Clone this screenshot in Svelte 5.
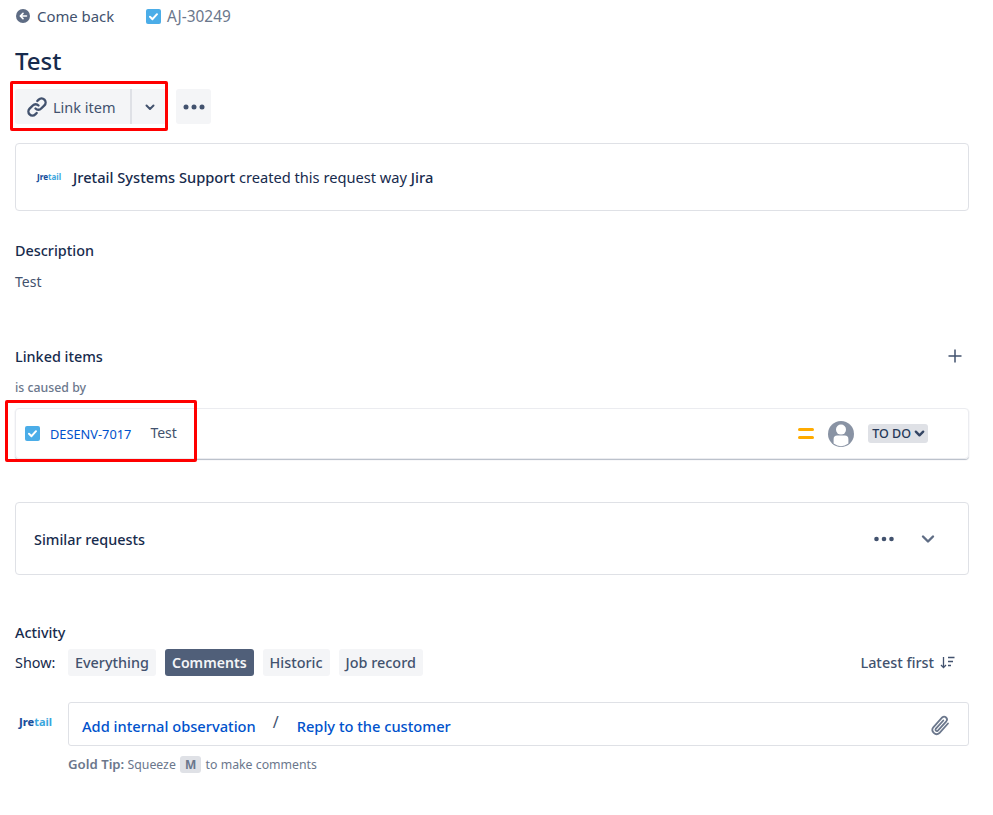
<script>
  const filters = ['Everything', 'Comments', 'Historic', 'Job record']
  let activeFilter = 'Comments'
</script>

<div class="page">
  <div class="crumbs">
    <a class="back">
      <svg width="16" height="16" viewBox="0 0 16 16"><circle cx="8" cy="8" r="7" fill="#5e6c84"/><path d="M11.5 8H5.5M8 5.4 5.3 8 8 10.6" fill="none" stroke="#fff" stroke-width="1.6" stroke-linecap="round" stroke-linejoin="round"/></svg>
      Come back
    </a>
    <span class="issue-key">
      <svg class="check" width="15" height="15" viewBox="0 0 15 15"><rect width="15" height="15" rx="2" fill="#4bade8"/><path d="M4 7.8 6.5 10.2 11 5.2" fill="none" stroke="#fff" stroke-width="2" stroke-linecap="round" stroke-linejoin="round"/></svg>
      AJ-30249
    </span>
  </div>

  <h1>Test</h1>

  <div class="actions">
    <div class="split">
      <button class="btn link-btn">
        <svg width="24" height="24" viewBox="0 0 24 24" fill="none" stroke="#42526e" stroke-width="2.4" stroke-linecap="round"><path d="M10.5 13.5a4 4 0 0 0 5.7 0l3.2-3.2a4 4 0 0 0-5.7-5.7l-1.4 1.4"/><path d="M13.5 10.5a4 4 0 0 0-5.7 0l-3.2 3.2a4 4 0 0 0 5.7 5.7l1.4-1.4"/></svg>
        Link item
      </button>
      <button class="btn caret-btn" aria-label="More link options">
        <svg width="12" height="12" viewBox="0 0 12 12"><path d="M2.5 4.5 6 8l3.5-3.5" fill="none" stroke="#42526e" stroke-width="2" stroke-linecap="round" stroke-linejoin="round"/></svg>
      </button>
    </div>
    <button class="btn more-btn" aria-label="More actions">
      <svg width="22" height="6" viewBox="0 0 22 6" fill="#42526e"><circle cx="3" cy="3" r="2.5"/><circle cx="11" cy="3" r="2.5"/><circle cx="19" cy="3" r="2.5"/></svg>
    </button>
  </div>

  <div class="card created">
    <span class="logo small"><b>Jre</b><i>tail</i></span>
    <p><strong>Jretail Systems Support</strong> created this request way <span class="medium">Jira</span></p>
  </div>

  <h2 class="desc-title">Description</h2>
  <p class="desc">Test</p>

  <div class="linked-head">
    <h2>Linked items</h2>
    <svg width="14" height="14" viewBox="0 0 14 14"><path d="M7 .5v13M.5 7h13" stroke="#42526e" stroke-width="1.5"/></svg>
  </div>
  <div class="relation">is caused by</div>

  <div class="linked-row">
    <svg class="check" width="15" height="15" viewBox="0 0 15 15"><rect width="15" height="15" rx="2" fill="#4bade8"/><path d="M4 7.8 6.5 10.2 11 5.2" fill="none" stroke="#fff" stroke-width="2" stroke-linecap="round" stroke-linejoin="round"/></svg>
    <a class="row-key">DESENV-7017</a>
    <span class="row-title">Test</span>
    <span class="row-right">
      <svg width="16" height="12" viewBox="0 0 16 12" fill="#ffab00"><rect y="0" width="16" height="3" rx="1.5"/><rect y="8" width="16" height="3" rx="1.5"/></svg>
      <svg class="avatar" width="26" height="26" viewBox="0 0 26 26"><circle cx="13" cy="13" r="13" fill="#8993a4"/><circle cx="13" cy="8.6" r="5" fill="#fff"/><path d="M5.6 22.6v-4.4a3.6 3.6 0 0 1 3.6-3.6h7.6a3.6 3.6 0 0 1 3.6 3.6v4.4a13 13 0 0 1-14.8 0Z" fill="#fff"/></svg>
      <span class="status">TO DO
        <svg width="11" height="11" viewBox="0 0 12 12"><path d="M2 4 6 8l4-4" fill="none" stroke="#344563" stroke-width="2.6" stroke-linecap="round" stroke-linejoin="round"/></svg>
      </span>
    </span>
  </div>

  <div class="card similar">
    <h2>Similar requests</h2>
    <span class="similar-right">
      <svg width="20" height="6" viewBox="0 0 20 6" fill="#42526e"><circle cx="2.5" cy="3" r="2.3"/><circle cx="10" cy="3" r="2.3"/><circle cx="17.5" cy="3" r="2.3"/></svg>
      <svg width="14" height="10" viewBox="0 0 14 10"><path d="M2 2.5 7 7.5l5-5" fill="none" stroke="#5e6c84" stroke-width="2.4" stroke-linecap="round" stroke-linejoin="round"/></svg>
    </span>
  </div>

  <h2 class="activity-title">Activity</h2>
  <div class="filter-row">
    <span class="show">Show:</span>
    {#each filters as filter}
      <button class="filter" class:active={filter === activeFilter}>{filter}</button>
    {/each}
    <span class="sort">Latest first
      <svg width="15" height="13" viewBox="0 0 15 13" fill="none" stroke="#42526e" stroke-width="1.3"><path d="M3.5 1v10.5M1 9l2.5 2.6L6 9"/><path d="M8 1.5h6.5M8 5.500h5M8 9.500h3"/></svg>
    </span>
  </div>

  <div class="comment-row">
    <span class="logo wide"><b>Jre</b><i>tail</i></span>
    <div class="comment-box">
      <a>Add internal observation</a>
      <span class="slash">/</span>
      <a>Reply to the customer</a>
      <svg class="clip" width="22" height="24" viewBox="0 0 22 24" fill="none" stroke="#6b778c" stroke-width="1.8" stroke-linecap="round"><path d="M19 9.5 10.400 19a4.200 4.200 0 0 1-6.100-5.700l8.900-9.800a2.800 2.800 0 0 1 4.100 3.800l-8.600 9.500a1.400 1.400 0 0 1-2-1.900l7.600-8.400"/></svg>
    </div>
  </div>
  <p class="tip"><strong>Gold Tip:</strong> Squeeze <kbd>M</kbd> to make comments</p>

  <div class="mark mark-actions"></div>
  <div class="mark mark-row"></div>
</div>

<style>
  :global(body) {
    background: #fff;
  }

  .page {
    position: relative;
    box-sizing: border-box;
    width: 993px;
    height: 815px;
    padding: 5px 24px 0 15px;
    font-family: "Noto Sans", sans-serif;
    font-size: 14.65px;
    color: #172b4d;
    overflow: hidden;
  }

  p, h1, h2 {
    margin: 0;
  }

  h2 {
    font-size: 14.4px;
    font-weight: 500;
  }

  button {
    border: 0;
    font: inherit;
    cursor: pointer;
  }

  .crumbs {
    display: flex;
    align-items: center;
    height: 22px;
    font-size: 14.9px;
    color: #42526e;
  }

  .back {
    display: flex;
    align-items: center;
    gap: 6px;
    width: 131px;
  }

  .issue-key {
    display: flex;
    align-items: center;
    gap: 6px;
    font-size: 15.4px;
    color: #6b778c;
  }

  h1 {
    margin-top: 19px;
    font-size: 24px;
    line-height: 30px;
    font-weight: 500;
    color: #172b4d;
  }

  .actions {
    display: flex;
    gap: 8px;
    margin-top: 13px;
  }

  .split {
    display: flex;
    width: 153px;
    height: 35px;
  }

  .btn {
    display: flex;
    align-items: center;
    justify-content: center;
    background: #f4f5f7;
    color: #42526e;
    border-radius: 3px;
    padding: 0;
  }

  .link-btn {
    justify-content: flex-start;
    gap: 4px;
    width: 115px;
    padding-left: 10px;
    font-size: 14.5px;
    border-radius: 3px 0 0 3px;
  }

  .caret-btn {
    flex: 1;
    padding-right: 1px;
    border-left: 2px solid #dfe1e6;
    border-radius: 0;
  }

  .more-btn {
    width: 35px;
  }

  .card {
    border: 1px solid #dfe1e6;
    border-radius: 4px;
    box-sizing: border-box;
  }

  .created {
    display: flex;
    align-items: center;
    gap: 11px;
    height: 68px;
    margin-top: 19px;
    padding-left: 20px;
  }

  strong {
    font-weight: 500;
  }

  .medium {
    font-weight: 500;
  }

  .logo {
    line-height: 1;
    text-align: center;
    white-space: nowrap;
  }

  .logo b {
    font-weight: 800;
    color: #1b4f9c;
  }

  .logo i {
    font-style: normal;
    font-weight: 700;
    color: #3aa6dd;
  }

  .logo.small {
    width: 26px;
    font-size: 8px;
  }

  .logo.wide {
    width: 53px;
    padding: 0 15px 0 3px;
    box-sizing: border-box;
    margin-top: -6px;
    font-size: 11px;
  }

  .desc-title {
    margin-top: 30px;
    line-height: 20px;
  }

  .desc {
    margin-top: 11px;
    font-size: 14px;
    line-height: 20px;
    color: #42526e;
  }

  .linked-head {
    display: flex;
    align-items: center;
    justify-content: space-between;
    margin-top: 54px;
    padding-right: 7px;
    height: 20px;
  }

  .relation {
    margin-top: 14px;
    font-size: 12.3px;
    font-weight: 500;
    line-height: 16px;
    color: #6b778c;
  }

  .linked-row {
    display: flex;
    align-items: center;
    box-sizing: border-box;
    height: 51px;
    margin-top: 12px;
    padding: 0 40px 0 9px;
    border: 1px solid #ebecf0;
    border-radius: 4px;
    box-shadow: 0 1px 1px rgba(9, 30, 66, 0.3);
  }

  .row-key {
    margin: 1px 0 0 10px;
    font-size: 12.8px;
    color: #0052cc;
  }

  .row-title {
    margin: -2px 0 0 19px;
    font-size: 14px;
    color: #42526e;
  }

  .row-right {
    display: flex;
    align-items: center;
    gap: 14px;
    margin-left: auto;
  }

  .status {
    display: flex;
    align-items: center;
    gap: 3px;
    height: 19px;
    padding: 0 3px 0 4px;
    border-radius: 3px;
    background: #dfe1e6;
    font-size: 12.5px;
    font-weight: 500;
    color: #253858;
  }

  .similar {
    display: flex;
    align-items: center;
    justify-content: space-between;
    height: 73px;
    margin-top: 43px;
    padding: 0 33px 0 18px;
  }

  .similar h2 {
    padding-top: 1px;
  }

  .similar-right {
    display: flex;
    align-items: center;
    gap: 27px;
  }

  .activity-title {
    margin-top: 48px;
    line-height: 20px;
  }

  .filter-row {
    display: flex;
    align-items: center;
    gap: 9px;
    margin-top: 6px;
    height: 27px;
    font-size: 14.4px;
  }

  .show {
    width: 44px;
  }

  .filter {
    height: 27px;
    padding: 0 7px 1px;
    border-radius: 3px;
    background: #f4f5f7;
    color: #42526e;
    font-weight: 500;
  }

  .filter.active {
    background: #505f79;
    color: #f4f5f7;
    font-weight: 600;
    font-size: 14.1px;
  }

  .sort {
    display: flex;
    align-items: center;
    gap: 6px;
    margin-left: auto;
    padding: 0 14px 1px 0;
    color: #42526e;
    font-weight: 500;
  }

  .comment-row {
    display: flex;
    align-items: center;
    margin-top: 26px;
  }

  .comment-box {
    flex: 1;
    display: flex;
    align-items: center;
    box-sizing: border-box;
    height: 44px;
    padding: 3px 17px 0 13px;
    border: 1px solid #dfe1e6;
    border-radius: 3px;
    font-size: 14.65px;
    color: #0052cc;
    font-weight: 500;
  }

  .slash {
    margin: -8px 18px 0 17px;
    font-size: 16px;
    color: #42526e;
    font-weight: 400;
  }

  .clip {
    margin: 0 0 0 auto;
  }

  .tip {
    margin: 8px 0 0 53px;
    font-size: 12.3px;
    line-height: 20px;
    color: #6b778c;
  }

  .tip strong {
    font-size: 13.2px;
    font-weight: 600;
  }

  kbd {
    display: inline-block;
    padding: 0 5px;
    border-radius: 3px;
    background: #dfe1e6;
    font-family: inherit;
    font-weight: 700;
    font-size: 12px;
    line-height: 17px;
    margin: 0 1px;
  }

  .mark {
    position: absolute;
    box-sizing: border-box;
    border: 3px solid #f00;
    border-radius: 2px;
  }

  .mark-actions {
    left: 10px;
    top: 81px;
    width: 158px;
    height: 50px;
  }

  .mark-row {
    left: 5px;
    top: 400px;
    width: 192px;
    height: 62px;
  }
</style>
